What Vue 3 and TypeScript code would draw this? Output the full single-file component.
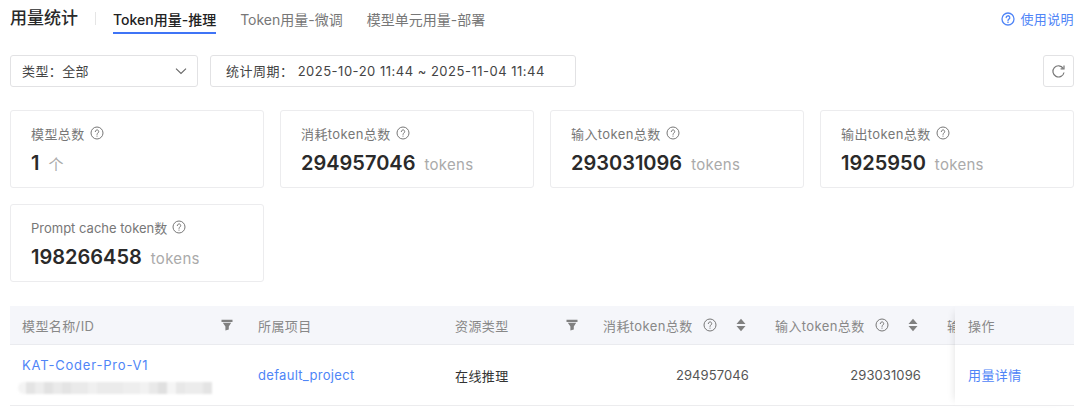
<script setup lang="ts">
interface Stat {
  label: string
  value: string
  unit: string
  tight?: boolean
}

const tabs: string[] = ['Token用量-推理', 'Token用量-微调', '模型单元用量-部署']

const stats: Stat[] = [
  { label: '模型总数', value: '1', unit: '个' },
  { label: '消耗token总数', value: '294957046', unit: 'tokens' },
  { label: '输入token总数', value: '293031096', unit: 'tokens' },
  { label: '输出token总数', value: '1925950', unit: 'tokens' },
  { label: 'Prompt cache token数', value: '198266458', unit: 'tokens', tight: true }
]

const sortCols: string[] = ['消耗token总数', '输入token总数']
const values: string[] = ['294957046', '293031096']
</script>

<template>
  <div class="page">
    <header class="top">
      <h1 class="title">用量统计</h1>
      <i class="divider"></i>
      <nav class="tabs">
        <a v-for="(tab, i) in tabs" :key="tab" class="tab" :class="{ active: i === 0 }">{{ tab }}</a>
      </nav>
      <a class="help">
        <svg width="14" height="14" viewBox="0 0 14 14" fill="none" stroke="currentColor" stroke-width="1.3">
          <circle cx="7" cy="7" r="6" />
          <path d="M5.200 5.600a1.800 1.800 0 1 1 2.700 1.500c-.6.400-.9.700-.9 1.400" stroke-linecap="round" />
          <circle cx="7" cy="10.200" r=".8" fill="currentColor" stroke="none" />
        </svg>
        使用说明
      </a>
    </header>

    <section class="filters">
      <div class="box select">
        <span>类型：全部</span>
        <svg width="12" height="12" viewBox="0 0 12 12" fill="none" stroke="#666" stroke-width="1.1">
          <path d="M1 3.600 6 8.400l5-4.800" />
        </svg>
      </div>
      <div class="box range"><span>统计周期： 2025-10-20 11:44 ~ 2025-11-04 11:44</span></div>
      <button class="box refresh" type="button" aria-label="刷新">
        <svg width="15" height="15" viewBox="0 0 15 15" fill="none" stroke="#777" stroke-width="1.200">
          <path d="M12.200 4.300A5.600 5.600 0 1 0 13 8.500" />
          <path d="M13 1.500v3.400H9.600" />
        </svg>
      </button>
    </section>

    <section class="cards">
      <div v-for="s in stats" :key="s.label" class="card">
        <div class="label" :class="{ tight: s.tight }">
          {{ s.label }}
          <svg width="14" height="14" viewBox="0 0 14 14" fill="none" stroke="#777" stroke-width="1">
            <circle cx="7" cy="7" r="6" />
            <path d="M5.300 5.600a1.700 1.700 0 1 1 2.600 1.400c-.6.400-.9.700-.9 1.400" stroke-linecap="round" />
            <circle cx="7" cy="10.100" r=".6" fill="#777" stroke="none" />
          </svg>
        </div>
        <div class="value">
          <b>{{ s.value }}</b>
          <span>{{ s.unit }}</span>
        </div>
      </div>
    </section>

    <section class="table">
      <div class="scroll">
        <div class="row head">
          <div class="cell c1">
            <span>模型名称/ID</span>
            <svg class="filter" width="12" height="12" viewBox="0 0 12 12" fill="#808080">
              <path d="M.5 .8h11v2.200H.5zM1.800 3.800h8.400L7.800 7.500v3l-3.400 1V7.500z" />
            </svg>
          </div>
          <div class="cell c2">所属项目</div>
          <div class="cell c3">
            <span>资源类型</span>
            <svg class="filter" width="12" height="12" viewBox="0 0 12 12" fill="#808080">
              <path d="M.5 .8h11v2.200H.5zM1.800 3.800h8.400L7.800 7.500v3l-3.400 1V7.500z" />
            </svg>
          </div>
          <div v-for="col in sortCols" :key="col" class="cell c4">
            {{ col }}
            <svg class="q" width="14" height="14" viewBox="0 0 14 14" fill="none" stroke="#777" stroke-width="1">
              <circle cx="7" cy="7" r="6" />
              <path d="M5.300 5.600a1.700 1.700 0 1 1 2.600 1.400c-.6.400-.9.700-.9 1.400" stroke-linecap="round" />
              <circle cx="7" cy="10.100" r=".6" fill="#777" stroke="none" />
            </svg>
            <svg class="sort" width="10" height="14" viewBox="0 0 10 14" fill="#808080">
              <path d="M5 .8 9.500 6H.5zM5 13.200.5 8h9z" />
            </svg>
          </div>
          <div class="cell c5">输</div>
        </div>
        <div class="row body">
          <div class="cell c1 name">
            <a>KAT-Coder-Pro-V1</a>
            <i class="blurred"></i>
          </div>
          <div class="cell c2 project"><a>default_project</a></div>
          <div class="cell c3 kind">在线推理</div>
          <div v-for="v in values" :key="v" class="cell c4 num">{{ v }}</div>
          <div class="cell c5"></div>
        </div>
      </div>
      <div class="fixed">
        <div class="cell head-cell">操作</div>
        <div class="cell body-cell"><a>用量详情</a></div>
      </div>
    </section>
  </div>
</template>

<style>
html,
body {
  margin: 0;
  background: #fff;
}
</style>

<style scoped>
* {
  box-sizing: border-box;
}

.page {
  width: 1080px;
  height: 409px;
  overflow: hidden;
  padding: 0 6px 0 10px;
  font-family: Inter, "Noto Sans CJK SC", sans-serif;
  font-size: 13px;
  letter-spacing: 0.4px;
  color: #333;
}

.top {
  display: flex;
  align-items: center;
  height: 34px;
  padding-top: 2px;
}

.title {
  margin: 0;
  font-size: 17px;
  font-weight: 500;
  line-height: 22px;
  letter-spacing: 0;
  color: #2a2a2a;
}

.divider {
  width: 1px;
  height: 13px;
  margin: 0 17px 0 17px;
  background: #e5e5e5;
}

.tabs {
  display: flex;
  gap: 24px;
  height: 32px;
}

.tab {
  height: 32px;
  padding-top: 8px;
  font-size: 14px;
  line-height: 20px;
  letter-spacing: 0;
  color: #777;
  white-space: nowrap;
}

.tab.active {
  color: #222;
  font-weight: 500;
  border-bottom: 2px solid #3f74f6;
}

.help {
  display: flex;
  align-items: center;
  gap: 5px;
  margin: 1px 0 0 auto;
  color: #4f85f7;
}

.filters {
  display: flex;
  gap: 12px;
  margin-top: 21px;
}

.box {
  display: flex;
  align-items: center;
  height: 32px;
  border: 1px solid #e2e2e4;
  border-radius: 3px;
  background: #fff;
  color: #444;
}

.box span {
  margin-top: -2px;
}

.select {
  width: 188px;
  padding: 0 10px 0 11px;
  justify-content: space-between;
}

.range {
  width: 366px;
  padding-left: 15px;
  letter-spacing: 0.5px;
  white-space: pre;
}

.refresh {
  width: 31px;
  padding: 0;
  margin-left: auto;
  justify-content: center;
}

.cards {
  display: grid;
  grid-template-columns: repeat(4, 254px);
  gap: 16px;
  margin-top: 23px;
}

.card {
  height: 78px;
  padding: 12px 20px 0;
  border: 1px solid #ececee;
  border-radius: 3px;
}

.label {
  display: flex;
  align-items: center;
  gap: 5px;
  height: 20px;
  color: #777;
  white-space: nowrap;
}

.label.tight {
  letter-spacing: 0;
}

.value {
  display: flex;
  align-items: baseline;
  gap: 9px;
  margin-top: 5px;
  line-height: 30px;
}

.value b {
  font-size: 20px;
  font-weight: 600;
  letter-spacing: 0;
  color: #2a2a2a;
}

.value span {
  font-size: 15px;
  letter-spacing: 0.3px;
  color: #aaa;
}

.table {
  display: flex;
  margin-top: 24px;
}

.scroll {
  flex: 1;
  min-width: 0;
  overflow: hidden;
}

.row {
  display: flex;
}

.head {
  height: 39px;
  background: #f5f6fa;
  border-bottom: 1px solid #eaebef;
  color: #888;
}

.body {
  height: 61px;
  border-bottom: 1px solid #ececee;
}

.cell {
  display: flex;
  align-items: center;
  flex: none;
  padding: 0 12px;
  white-space: nowrap;
}

.c1 {
  width: 236px;
  justify-content: space-between;
}

.c2 {
  width: 197px;
}

.c3 {
  width: 148px;
  justify-content: space-between;
}

.c4 {
  width: 172px;
}

.c5 {
  width: 20px;
  overflow: hidden;
}

.q {
  flex: none;
  margin-left: 10px;
}

.sort {
  flex: none;
  margin-left: 19px;
}

.filter {
  margin-right: 1px;
}

.num {
  justify-content: flex-end;
  padding-right: 14px;
  letter-spacing: 0.1px;
  color: #555;
}

.kind {
  color: #333;
}

a {
  color: #4f85f7;
}

.project {
  letter-spacing: 0.3px;
}

.name {
  flex-direction: column;
  align-items: flex-start;
  justify-content: flex-start;
  padding-top: 12px;
  letter-spacing: 0.8px;
  line-height: 16px;
}

.blurred {
  display: block;
  width: 194px;
  height: 12px;
  margin: 9px 0 0 -4px;
  border-radius: 6px 0 0 6px;
  background: linear-gradient(
    90deg,
    #f4f4f4 0 8px,
    #e4e4e4 8px 17px,
    #ededed 17px 26px,
    #e2e2e2 26px 35px,
    #eaeaea 35px 44px,
    #e4e4e4 44px 53px,
    #eaeaea 53px 70px,
    #f0f0f0 70px 79px,
    #ebebeb 79px 105px,
    #eeeeee 105px 122px,
    #f2f2f2 122px 131px,
    #e9e9e9 131px 140px,
    #e0e0e0 140px 149px,
    #f5f5f5 149px 158px,
    #e8e8e8 158px 167px,
    #ececec 167px 185px,
    #e4e4e4 185px 194px
  );
  filter: blur(1px);
}

.fixed {
  flex: none;
  width: 119px;
  background: #fff;
  box-shadow: -6px 0 8px -6px rgba(0, 0, 0, 0.12);
  z-index: 1;
}

.head-cell {
  height: 39px;
  padding-left: 13px;
  background: #f5f6fa;
  border-bottom: 1px solid #eaebef;
  color: #888;
}

.body-cell {
  height: 61px;
  padding-left: 13px;
  padding-bottom: 2px;
  border-bottom: 1px solid #ececee;
}
</style>
